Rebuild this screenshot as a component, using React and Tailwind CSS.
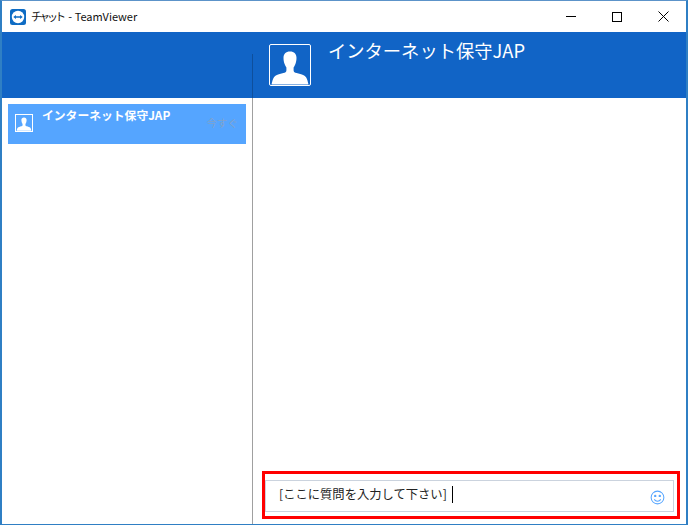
const jp = { fontFamily: '"Noto Sans CJK JP","Liberation Sans",sans-serif' };

function Person({ className }) {
  return (
    <svg viewBox="0 0 40 40" className={className} fill="white">
      <path d="M20 6.500c-4.300 0-6.500 2.700-6.500 6.300 0 2.400.4 4.400 1 6 .5 1.500 1.200 2.800 1.900 3.600v3c-.1 1.400-1.200 2.100-3 2.700-3.700 1.200-7.400 1.800-9.300 3.800C2.900 33.700 2.100 36.500 1.500 39.500h37c-.6-3-1.400-5.800-2.600-7.600-1.900-2-5.600-2.600-9.300-3.800-1.800-.6-2.900-1.300-3-2.700v-3c.7-.8 1.400-2.100 1.900-3.600.6-1.600 1-3.600 1-6 0-3.600-2.200-6.300-6.500-6.300z" />
    </svg>
  );
}

export default function App() {
  return (
    <div className="w-[688px] h-[525px] bg-white border-t border-x-2 border-b border-[#2f7fc4] border-t-[#5c93c9] flex flex-col overflow-hidden box-border" style={jp}>
      <div className="h-[31px] shrink-0 flex items-center pl-2 bg-white">
        <svg viewBox="0 0 16 16" className="w-4 h-4 shrink-0">
          <rect width="16" height="16" rx="2.500" fill="#0e6cc4" />
          <circle cx="8" cy="8" r="6.200" fill="white" />
          <path d="M3.300 8l2.600-2v1.200h4.200V6l2.600 2-2.600 2V8.800H5.900V10z" fill="#0e6cc4" />
        </svg>
        <span className="ml-[5px] text-[11px] text-[#111] leading-none whitespace-nowrap">
          <span className="text-[11px] tracking-[-3px] mr-[3px]">チャット</span> - TeamViewer
        </span>
        <div className="ml-auto flex items-center">
          <div className="w-[46px] flex justify-center">
            <div className="w-[10px] h-px bg-black" />
          </div>
          <div className="w-[46px] flex justify-center">
            <div className="w-[10px] h-[10px] border border-black" />
          </div>
          <div className="w-[46px] flex justify-center">
            <svg viewBox="0 0 11 11" className="w-[11px] h-[11px]" stroke="black" strokeWidth="1" fill="none">
              <path d="M.5.5l10 10M10.500.5l-10 10" />
            </svg>
          </div>
        </div>
      </div>

      <div className="h-[66px] shrink-0 bg-[#1164c6] flex">
        <div className="w-[251px] shrink-0 flex flex-col justify-end">
          <div className="h-[44px] border-r border-[#0e4f9c]" />
        </div>
        <div className="pl-[16px] pt-[12px] flex items-start">
          <div className="w-[42px] h-[42px] border border-white rounded-[2px] overflow-hidden">
            <Person className="w-full h-full" />
          </div>
          <div className="ml-[17px] mt-[-7px] text-[18.300px] leading-[26px] text-white whitespace-nowrap">インターネット保守JAP</div>
        </div>
      </div>

      <div className="flex-1 flex min-h-0">
        <div className="w-[251px] shrink-0 border-r border-[#a0a0a0] pt-[6px] pl-[6px] pr-[6px]">
          <div className="h-[40px] bg-[#55a5ff] relative flex">
            <div className="ml-[7px] mt-[10px] w-[18px] h-[18px] border border-white overflow-hidden">
              <Person className="w-full h-full" />
            </div>
            <div className="ml-[9px] mt-[3px] text-[11.800px] leading-[16px] font-bold text-white whitespace-nowrap">インターネット保守JAP</div>
            <div className="absolute right-[8px] top-[12px] text-[10.500px] leading-[14px] text-[#80a3cc]">今すぐ</div>
          </div>
        </div>
        <div className="flex-1 flex flex-col justify-end pl-[9px] pr-[6px] pb-[5px]">
          <div className="h-[48px] border-[3px] border-[#ff0000] pr-[3px] pt-[6px]">
            <div className="h-[32px] border border-[#cbd3de] flex items-center pl-[13px] pr-[8px] pb-[3px] bg-white">
              <span className="text-[12.300px] text-[#222] whitespace-nowrap">[ここに質問を入力して下さい]</span>
              <div className="ml-[5px] w-px h-[17px] bg-black" />
              <svg viewBox="0 0 16 16" className="ml-auto mt-[5px] w-[15px] h-[15px]" fill="none" stroke="#55a5ff" strokeWidth="1.100">
                <circle cx="8" cy="8" r="6.800" />
                <circle cx="5.600" cy="6.300" r=".7" fill="#55a5ff" />
                <circle cx="10.400" cy="6.300" r=".7" fill="#55a5ff" />
                <path d="M4.500 10c1 1.500 2.200 2 3.500 2s2.500-.5 3.500-2" />
              </svg>
            </div>
          </div>
        </div>
      </div>
    </div>
  );
}
